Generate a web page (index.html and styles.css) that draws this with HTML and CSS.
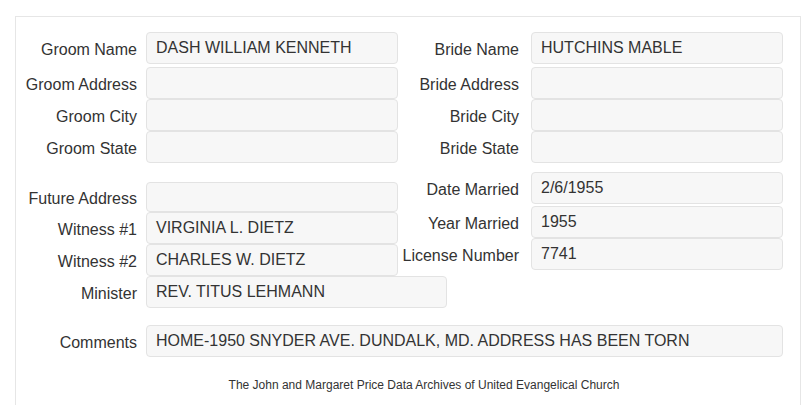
FILE: index.html
```html
<!DOCTYPE html>
<html lang="en">
  <head>
    <meta charset="UTF-8">
    <title>Marriage Record</title>
    <link rel="stylesheet" href="styles.css">
  </head>
  <body>
    <div class="record">
      <!-- Groom / bride -->
      <div class="pair-row first">
        <div class="entry left"><span class="label">Groom Name</span><div class="value">DASH WILLIAM KENNETH</div></div>
        <div class="entry right"><span class="label">Bride Name</span><div class="value">HUTCHINS MABLE</div></div>
      </div>
      <div class="pair-row">
        <div class="entry left"><span class="label">Groom Address</span><div class="value"></div></div>
        <div class="entry right"><span class="label">Bride Address</span><div class="value"></div></div>
      </div>
      <div class="pair-row">
        <div class="entry left"><span class="label">Groom City</span><div class="value"></div></div>
        <div class="entry right"><span class="label">Bride City</span><div class="value"></div></div>
      </div>
      <div class="pair-row">
        <div class="entry left"><span class="label">Groom State</span><div class="value"></div></div>
        <div class="entry right"><span class="label">Bride State</span><div class="value"></div></div>
      </div>

      <!-- Wedding details -->
      <div class="details">
        <div class="details-col left-col">
          <div class="entry left"><span class="label">Future Address</span><div class="value short"></div></div>
          <div class="entry left"><span class="label">Witness #1</span><div class="value">VIRGINIA L. DIETZ</div></div>
          <div class="entry left"><span class="label">Witness #2</span><div class="value">CHARLES W. DIETZ</div></div>
          <div class="entry left"><span class="label">Minister</span><div class="value wide">REV. TITUS LEHMANN</div></div>
        </div>
        <div class="details-col right-col">
          <div class="entry right date"><span class="label">Date Married</span><div class="value">2/6/1955</div></div>
          <div class="entry right"><span class="label">Year Married</span><div class="value">1955</div></div>
          <div class="entry right"><span class="label">License Number</span><div class="value">7741</div></div>
        </div>
      </div>

      <div class="entry left comments"><span class="label">Comments</span><div class="value full">HOME-1950 SNYDER AVE. DUNDALK, MD. ADDRESS HAS BEEN TORN</div></div>

      <p class="footer">The John and Margaret Price Data Archives of United Evangelical Church</p>
    </div>
  </body>
</html>
```
FILE: styles.css
```css
body {
  margin: 0;
  font-family: "Liberation Sans", Arial, sans-serif;
  color: #333;
  background-color: #fff;
}

.record {
  margin: 16px 4px 0 15px;
  padding: 15px 17px 0 0;
  border: 1px solid #e6e6e6;
  border-bottom: none;
  min-height: 373px;
}

.pair-row {
  display: flex;
}

.pair-row.first {
  margin-bottom: 3px;
}

.entry {
  display: flex;
  align-items: center;
}

.label {
  flex-shrink: 0;
  font-size: 16px;
  text-align: right;
  white-space: nowrap;
  padding-top: 3px;
}

.entry.left .label {
  width: 121px;
  padding-right: 9px;
}

.entry.right .label {
  width: 121px;
  padding-right: 12px;
}

.value {
  flex-shrink: 0;
  box-sizing: border-box;
  width: 252px;
  height: 32px;
  padding: 0 9px;
  display: flex;
  align-items: center;
  font-size: 16px;
  color: #333;
  background-color: #f7f7f7;
  border: 1px solid #e3e3e3;
  border-radius: 4px;
  white-space: nowrap;
}

.value.short {
  height: 30px;
}

.value.wide {
  width: 301px;
}

.value.full {
  width: 637px;
}

.details {
  display: flex;
  margin-top: 9px;
}

.left-col {
  width: 382px;
  padding-top: 10px;
}

.entry.date {
  margin-bottom: 2px;
}

.comments {
  margin-top: 17px;
}

.footer {
  margin: 20px 0 0;
  font-size: 12px;
  line-height: 16px;
  text-align: center;
  padding-left: 49px;
}
```
